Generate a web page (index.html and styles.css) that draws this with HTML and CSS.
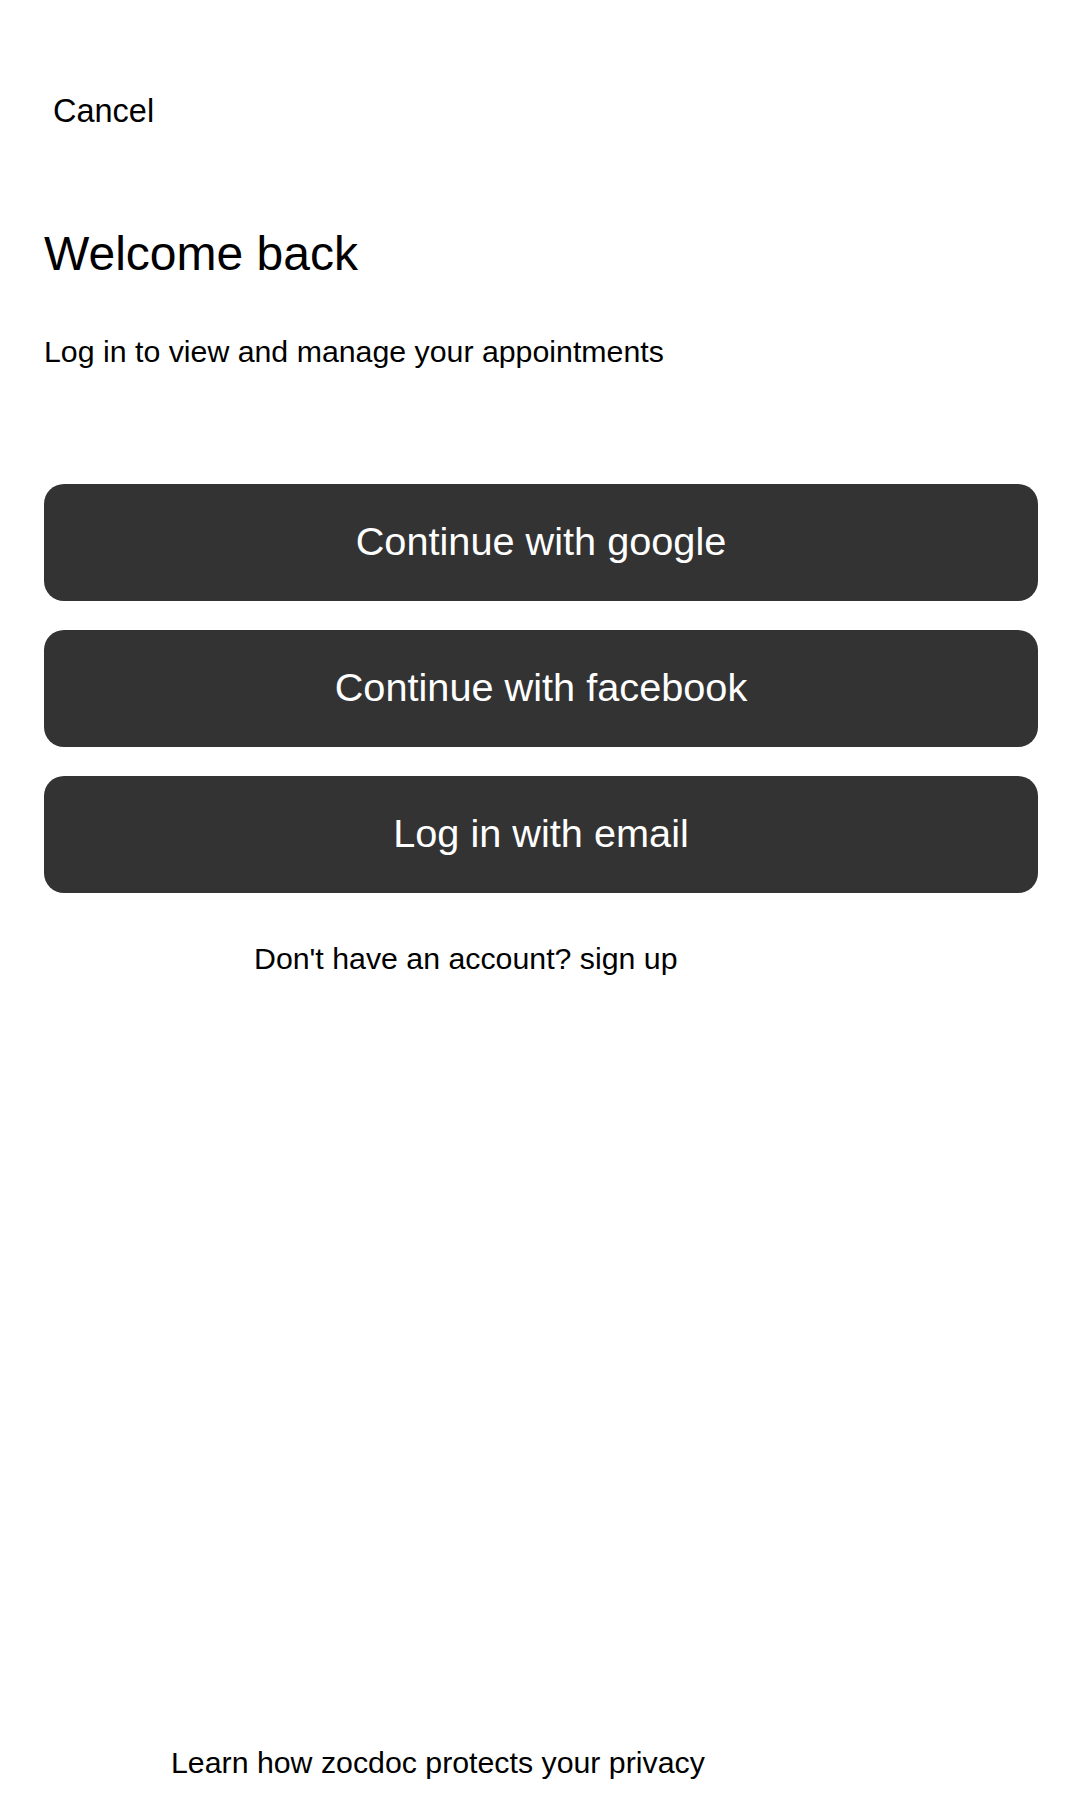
FILE: index.html
```html
<!DOCTYPE html>
<html lang="en">
<head>
<meta charset="utf-8">
<title>Welcome back</title>
<link rel="stylesheet" href="styles.css">
</head>
<body>
<div class="page">
  <div class="topbar">
    <a class="cancel">Cancel</a>
  </div>
  <h1 class="title">Welcome back</h1>
  <p class="subtitle">Log in to view and manage your appointments</p>
  <div class="actions">
    <button class="btn">Continue with google</button>
    <button class="btn">Continue with facebook</button>
    <button class="btn">Log in with email</button>
  </div>
  <p class="signup">Don't have an account? sign up</p>
  <p class="privacy">Learn how zocdoc protects your privacy</p>
</div>
</body>
</html>
```

FILE: styles.css
```css
html, body {
  margin: 0;
  padding: 0;
  background: #ffffff;
}

body {
  font-family: "Liberation Sans", Arial, sans-serif;
  color: #000000;
}

.page {
  min-height: 1800px;
  box-sizing: border-box;
  display: flex;
  flex-direction: column;
  padding: 91px 42px 19px 44px;
}

.topbar {
  display: flex;
  padding-left: 9px;
}

.cancel {
  font-size: 32.5px;
  line-height: 40px;
  color: #000000;
}

.title {
  margin: 95px 0 0 0;
  font-size: 48px;
  line-height: 56px;
  font-weight: normal;
}

.subtitle {
  margin: 52px 0 0 0;
  font-size: 30.3px;
  line-height: 36px;
}

.actions {
  margin-top: 114px;
  display: flex;
  flex-direction: column;
  gap: 29px;
}

.btn {
  height: 117px;
  border: none;
  border-radius: 20px;
  background: #333333;
  color: #ffffff;
  font-family: "Liberation Sans", Arial, sans-serif;
  font-size: 39.7px;
  line-height: 46px;
  padding: 0 0 4px 0;
  display: flex;
  align-items: center;
  justify-content: center;
}

.signup {
  margin: 48px 0 0 210px;
  font-size: 30.3px;
  line-height: 36px;
}

.privacy {
  margin: auto 0 0 127px;
  font-size: 30.3px;
  line-height: 36px;
}
```
